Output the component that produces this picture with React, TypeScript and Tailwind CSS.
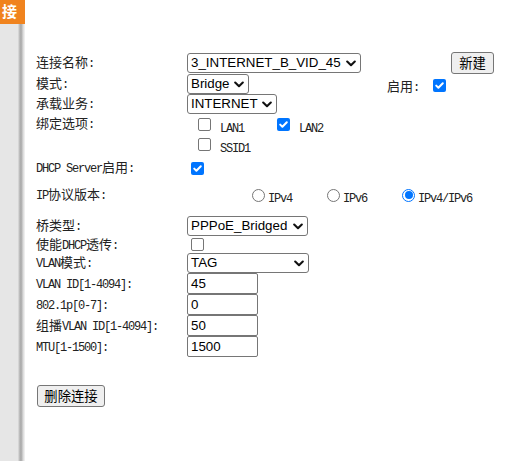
import React from "react";

const CJK = '"Noto Sans CJK SC", "Noto Sans", sans-serif';

function M({ children }: { children: React.ReactNode }) {
  return <span className="font-['Liberation_Mono'] text-[12px] tracking-[-1.2px]">{children}</span>;
}

function Label({ children }: { children: React.ReactNode }) {
  return (
    <div
      className="w-[151px] shrink-0 text-[13px] leading-[16px] text-[#222] whitespace-nowrap"
      style={{ fontFamily: CJK }}
    >
      {children}
    </div>
  );
}

function Chevron() {
  return (
    <svg width="10" height="7" viewBox="0 0 10 7" className="shrink-0">
      <path d="M1.2 1.5 L5 5.2 L8.8 1.5" fill="none" stroke="#111" strokeWidth="2.1" strokeLinecap="round" strokeLinejoin="round" />
    </svg>
  );
}

function Select({ value, w }: { value: string; w: string }) {
  return (
    <div
      className={`${w} h-[20px] shrink-0 flex items-center justify-between border border-[#767676] rounded-[3px] bg-white pl-[3px] pr-[4px] font-['Liberation_Sans'] text-[13.33px] leading-[16px] text-black`}
    >
      <span className="whitespace-nowrap">{value}</span>
      <Chevron />
    </div>
  );
}

function Input({ value }: { value: string }) {
  return (
    <div className="w-[71px] h-[21px] shrink-0 flex items-center border border-[#767676] rounded-[2px] bg-white pl-[3px] font-['Liberation_Sans'] text-[13.33px] leading-[16px] text-black">
      {value}
    </div>
  );
}

function Check({ checked }: { checked?: boolean }) {
  if (checked) {
    return (
      <div className="w-[13px] h-[13px] shrink-0 rounded-[2px] bg-[#0075ff] flex items-center justify-center">
        <svg width="13" height="13" viewBox="0 0 13 13">
          <path d="M3.2 6.6 L5.4 8.8 L9.8 4.2" fill="none" stroke="#fff" strokeWidth="2" strokeLinecap="round" strokeLinejoin="round" />
        </svg>
      </div>
    );
  }
  return <div className="w-[13px] h-[13px] shrink-0 rounded-[2px] border border-[#767676] bg-white" />;
}

function Radio({ checked }: { checked?: boolean }) {
  if (checked) {
    return (
      <div className="w-[13px] h-[13px] shrink-0 rounded-full border-[1.5px] border-[#0075ff] bg-white flex items-center justify-center">
        <div className="w-[8px] h-[8px] rounded-full bg-[#0075ff]" />
      </div>
    );
  }
  return <div className="w-[13px] h-[13px] shrink-0 rounded-full border border-[#767676] bg-white" />;
}

function Button({ children, w }: { children: React.ReactNode; w: string }) {
  return (
    <div
      className={`${w} h-[22px] shrink-0 flex items-center justify-center border border-[#767676] rounded-[3px] bg-[#efefef] text-[13.33px] leading-[16px] text-black`}
      style={{ fontFamily: CJK }}
    >
      {children}
    </div>
  );
}

export default function App() {
  return (
    <div className="w-[511px] h-[461px] flex bg-white overflow-hidden">
      <div className="w-[25px] shrink-0 flex flex-col">
        <div
          className="h-[24px] bg-[#f0831e] text-white font-bold text-[15px] leading-[22px] pl-[2px] overflow-hidden whitespace-nowrap"
          style={{ fontFamily: CJK }}
        >
          接
        </div>
        <div className="flex-1 bg-[linear-gradient(to_right,#e6e6e6_0px,#e6e6e6_18px,#c4c4c4_19px,#a6a6a6_21px,#bdbdbd_22px,#d6d6d6_23px,#e8e8e8_24px,#f4f4f4_25px)]" />
      </div>

      <div className="flex-1 flex flex-col pl-[11px] pt-[52px]">
        <div className="h-[22px] flex items-center">
          <Label>
            连接名称<M>:</M>
          </Label>
          <Select value="3_INTERNET_B_VID_45" w="w-[174px]" />
          <div className="ml-[90px]">
            <Button w="w-[43px]">新建</Button>
          </div>
        </div>

        <div className="h-[20px] flex items-center">
          <Label>
            模式<M>:</M>
          </Label>
          <Select value="Bridge" w="w-[62px]" />
          <div className="ml-[138px] pt-[5px] text-[13px] leading-[16px] text-[#222] whitespace-nowrap" style={{ fontFamily: CJK }}>
            启用<M>:</M>
          </div>
          <div className="ml-[14px] pt-[2px]">
            <Check checked />
          </div>
        </div>

        <div className="h-[20px] flex items-center">
          <Label>
            承载业务<M>:</M>
          </Label>
          <Select value="INTERNET" w="w-[90px]" />
        </div>

        <div className="h-[20px] flex items-center">
          <Label>
            绑定选项<M>:</M>
          </Label>
          <div className="ml-[11px] w-[79px] flex items-center">
            <Check />
            <span className="ml-[9px] pt-[3px] text-[#222]">
              <M>LAN1</M>
            </span>
          </div>
          <div className="flex items-center">
            <Check checked />
            <span className="ml-[9px] pt-[3px] text-[#222]">
              <M>LAN2</M>
            </span>
          </div>
        </div>

        <div className="h-[20px] flex items-center">
          <div className="w-[151px] shrink-0" />
          <div className="ml-[11px] flex items-center">
            <Check />
            <span className="ml-[9px] pt-[3px] text-[#222]">
              <M>SSID1</M>
            </span>
          </div>
        </div>

        <div className="mt-[4px] h-[20px] flex items-center">
          <Label>
            <M>DHCP Server</M>启用<M>:</M>
          </Label>
          <div className="ml-[4px]">
            <Check checked />
          </div>
        </div>

        <div className="mt-[3px] h-[28px] flex items-center">
          <Label>
            <M>IP</M>协议版本<M>:</M>
          </Label>
          <div className="ml-[65px] w-[75px] flex items-center">
            <Radio />
            <span className="ml-[3px] pt-[2px] text-[#222]">
              <M>IPv4</M>
            </span>
          </div>
          <div className="w-[75px] flex items-center">
            <Radio />
            <span className="ml-[3px] pt-[2px] text-[#222]">
              <M>IPv6</M>
            </span>
          </div>
          <div className="flex items-center">
            <Radio checked />
            <span className="ml-[3px] pt-[2px] text-[#222]">
              <M>IPv4/IPv6</M>
            </span>
          </div>
        </div>

        <div className="mt-[7px] h-[20px] flex items-center">
          <Label>
            桥类型<M>:</M>
          </Label>
          <Select value="PPPoE_Bridged" w="w-[121px]" />
        </div>

        <div className="h-[17px] flex items-center">
          <Label>
            使能<M>DHCP</M>透传<M>:</M>
          </Label>
          <div className="ml-[4px]">
            <Check />
          </div>
        </div>

        <div className="h-[20px] flex items-center">
          <Label>
            <M>VLAN</M>模式<M>:</M>
          </Label>
          <Select value="TAG" w="w-[122px]" />
        </div>

        <div className="h-[21px] flex items-center">
          <Label>
            <M>VLAN ID[1-4094]:</M>
          </Label>
          <Input value="45" />
        </div>
        <div className="h-[21px] flex items-center">
          <Label>
            <M>802.1p[0-7]:</M>
          </Label>
          <Input value="0" />
        </div>
        <div className="h-[21px] flex items-center">
          <Label>
            组播<M>VLAN ID[1-4094]:</M>
          </Label>
          <Input value="50" />
        </div>
        <div className="h-[21px] flex items-center">
          <Label>
            <M>MTU[1-1500]:</M>
          </Label>
          <Input value="1500" />
        </div>

        <div className="mt-[28px] ml-[1px]">
          <Button w="w-[68px]">删除连接</Button>
        </div>
      </div>
    </div>
  );
}
